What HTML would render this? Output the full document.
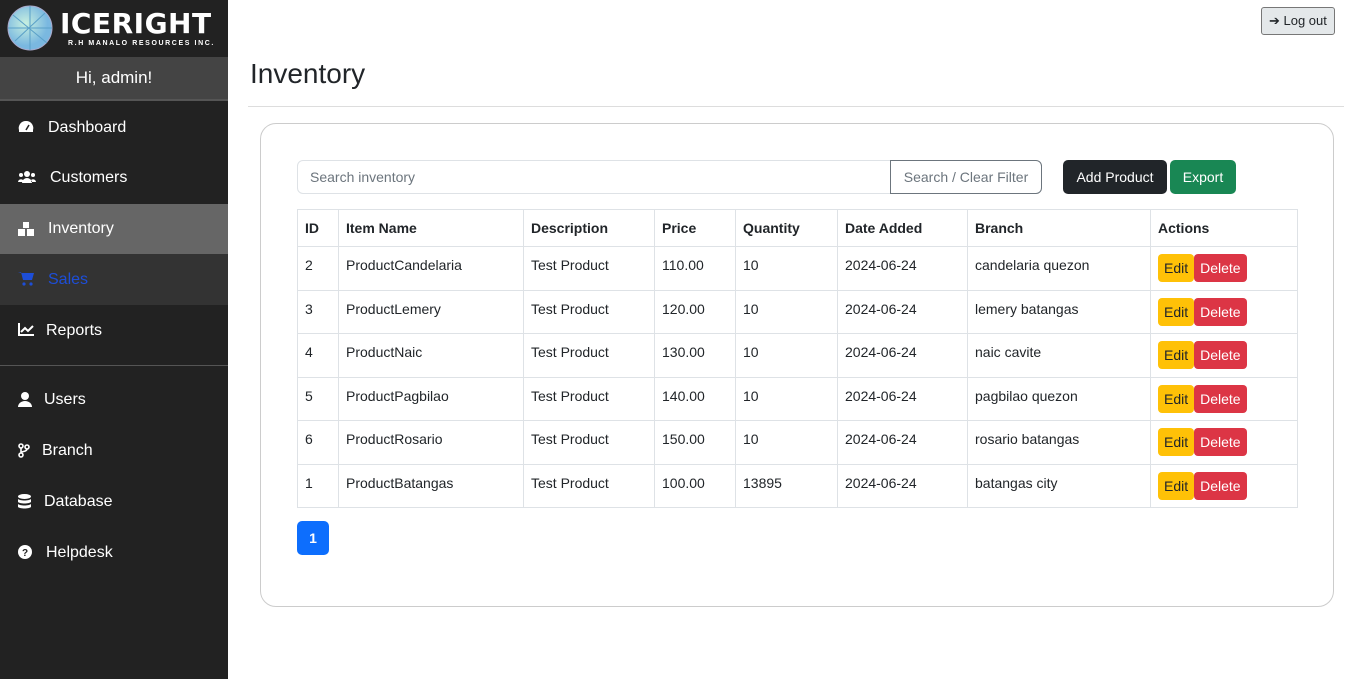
<!DOCTYPE html>
<html><head><style>
*{box-sizing:border-box;margin:0;padding:0}
body{width:1366px;height:679px;overflow:hidden;font-family:"Liberation Sans",Arial,sans-serif;background:#fff;position:relative;color:#212529}
.sb{position:absolute;left:0;top:0;width:228px;height:679px;background:#222}
.logo{height:57px;position:relative}
.hi{height:44px;background:#444;color:#fff;text-align:center;line-height:42px;font-size:17px;border-bottom:2px solid #555}
.it{position:absolute;left:0;width:228px;height:51px;color:#fff;font-size:16px;line-height:51px}
.it svg{position:absolute;left:18px;top:18px}
.it span{position:absolute;left:48px}
.main{position:absolute;left:228px;top:0;right:0}
h1{position:absolute;left:22px;top:58px;font-size:28px;font-weight:400}
.hr{position:absolute;left:20px;width:1096px;top:106px;border-top:1px solid #ddd}
.card{position:absolute;left:32px;top:123px;width:1074px;height:484px;border:1px solid #ccc;border-radius:16px}
table{position:absolute;left:36px;top:85px;border-collapse:collapse;font-size:14px}
td,th{border:1px solid #dee2e6;padding:0 7px;text-align:left;vertical-align:middle}
th{height:37px;font-weight:700}
td{height:43.5px;vertical-align:top;padding-top:10px}
td:last-child{padding-top:7px}
.b{display:inline-block;font-size:14px;height:28px;line-height:28px;border-radius:4px;padding:0 6px}
</style></head><body>
<div class="sb">
 <div class="logo">
  <svg width="54" height="54" style="position:absolute;left:5px;top:3px" viewBox="0 0 54 54"><defs><radialGradient id="g" cx="40%" cy="40%"><stop offset="0" stop-color="#c8f0e0"/><stop offset="1" stop-color="#7ab8e0"/></radialGradient></defs><circle cx="25" cy="25" r="22" fill="url(#g)" stroke="#aac" /><path d="M8 12 L42 40 M10 38 L40 10 M25 3 V47 M3 25 H47" stroke="#5aa0c8" stroke-width="1" fill="none"/></svg>
  <div style="position:absolute;left:60px;top:7px;color:#fff;font-weight:900;font-size:28px;letter-spacing:0.5px;font-family:'DejaVu Sans',sans-serif">ICERIGHT</div>
  <div style="position:absolute;left:68px;top:40px;color:#fff;font-size:7px;letter-spacing:1.6px;font-weight:700">R.H MANALO RESOURCES INC.</div>
 </div>
 <div class="hi">Hi, admin!</div>
 <div class="it" style="top:102px"><svg width="16" height="14" viewBox="0 0 16 14"><path d="M8 1A7 7 0 0 0 1 10v2h14v-2A7 7 0 0 0 8 1z" fill="#fff"/><path d="M8 10L11 5" stroke="#222" stroke-width="1.5"/></svg><span>Dashboard</span></div>
 <div class="it" style="top:152px"><svg width="18" height="14" viewBox="0 0 18 14"><circle cx="9" cy="4" r="3" fill="#fff"/><circle cx="3" cy="5" r="2" fill="#fff"/><circle cx="15" cy="5" r="2" fill="#fff"/><path d="M4 13a5 5 0 0 1 10 0zM0 12a3 3 0 0 1 5-2v2zM18 12a3 3 0 0 0-5-2v2z" fill="#fff"/></svg><span style="left:50px">Customers</span></div>
 <div class="it" style="top:204px;height:50px;background:#666;line-height:50px"><svg width="16" height="14" viewBox="0 0 16 14"><rect x="5" y="0" width="6" height="6" fill="#fff"/><rect x="0" y="7" width="7" height="7" fill="#fff"/><rect x="9" y="7" width="7" height="7" fill="#fff"/></svg><span>Inventory</span></div>
 <div class="it" style="top:254px;height:51px;background:#333;color:#1d4ed8"><svg width="16" height="14" viewBox="0 0 16 14"><path d="M0 0h3l2 8h9l2-7H4" fill="#1d4ed8"/><circle cx="6" cy="12" r="1.6" fill="#1d4ed8"/><circle cx="13" cy="12" r="1.6" fill="#1d4ed8"/></svg><span>Sales</span></div>
 <div class="it" style="top:305px"><svg width="16" height="13" viewBox="0 0 16 13"><path d="M1 0v12h15" stroke="#fff" stroke-width="2" fill="none"/><path d="M3 9l4-4 3 3 5-5" stroke="#fff" stroke-width="2" fill="none"/></svg><span style="left:46px">Reports</span></div>
 <div style="position:absolute;top:365px;left:0;width:228px;border-top:1px solid #555"></div>
 <div class="it" style="top:374px"><svg width="14" height="15" viewBox="0 0 14 15"><circle cx="7" cy="4" r="4" fill="#fff"/><path d="M0 15a7 6 0 0 1 14 0z" fill="#fff"/></svg><span style="left:44px">Users</span></div>
 <div class="it" style="top:425px"><svg width="12" height="15" viewBox="0 0 12 15"><circle cx="3" cy="3" r="2" stroke="#fff" stroke-width="1.6" fill="none"/><circle cx="3" cy="12" r="2" stroke="#fff" stroke-width="1.6" fill="none"/><circle cx="9" cy="4" r="2" stroke="#fff" stroke-width="1.6" fill="none"/><path d="M3 5v5M9 6c0 3-6 2-6 4" stroke="#fff" stroke-width="1.6" fill="none"/></svg><span style="left:42px">Branch</span></div>
 <div class="it" style="top:476px"><svg width="13" height="15" viewBox="0 0 13 15"><ellipse cx="6.5" cy="2.5" rx="6.5" ry="2.5" fill="#fff"/><path d="M0 5c2 2 11 2 13 0v3c-2 2-11 2-13 0zM0 10c2 2 11 2 13 0v3c-2 2-11 2-13 0z" fill="#fff"/></svg><span style="left:44px">Database</span></div>
 <div class="it" style="top:527px"><svg width="14" height="14" viewBox="0 0 14 14"><circle cx="7" cy="7" r="7" fill="#fff"/><text x="7" y="11" font-size="10" font-weight="700" text-anchor="middle" fill="#222" font-family="Liberation Sans">?</text></svg><span style="left:46px">Helpdesk</span></div>
</div>
<div class="main">
 <div style="position:absolute;left:1033px;top:7px;width:74px;height:28px;border:1px solid #777;border-radius:3px;background:#e4e8ea;font-size:13px;line-height:26px;padding-left:7px">&#x2794;&nbsp;Log out</div>
 <h1>Inventory</h1>
 <div class="hr"></div>
 <div class="card">
  <div style="position:absolute;left:36px;top:36px;width:594px;height:34px;border:1px solid #dee2e6;border-radius:6px 0 0 6px;font-size:14px;color:#6c757d;line-height:32px;padding-left:12px">Search inventory</div>
  <div style="position:absolute;left:629px;top:36px;width:152px;height:34px;border:1px solid #6c757d;border-radius:0 6px 6px 0;font-size:14px;color:#6c757d;line-height:32px;text-align:center">Search / Clear Filter</div>
  <div style="position:absolute;left:802px;top:36px;width:104px;height:34px;background:#212529;color:#fff;border-radius:5px;font-size:14px;line-height:34px;text-align:center">Add Product</div>
  <div style="position:absolute;left:909px;top:36px;width:66px;height:34px;background:#198754;color:#fff;border-radius:5px;font-size:14px;line-height:34px;text-align:center">Export</div>
  <table>
   <tr><th style="width:41px">ID</th><th style="width:185px">Item Name</th><th style="width:131px">Description</th><th style="width:81px">Price</th><th style="width:102px">Quantity</th><th style="width:130px">Date Added</th><th style="width:183px">Branch</th><th style="width:147px">Actions</th></tr>
   <tr><td>2</td><td>ProductCandelaria</td><td>Test Product</td><td>110.00</td><td>10</td><td>2024-06-24</td><td>candelaria quezon</td><td><span class="b" style="background:#ffc107">Edit</span><span class="b" style="background:#dc3545;color:#fff">Delete</span></td></tr>
   <tr><td>3</td><td>ProductLemery</td><td>Test Product</td><td>120.00</td><td>10</td><td>2024-06-24</td><td>lemery batangas</td><td><span class="b" style="background:#ffc107">Edit</span><span class="b" style="background:#dc3545;color:#fff">Delete</span></td></tr>
   <tr><td>4</td><td>ProductNaic</td><td>Test Product</td><td>130.00</td><td>10</td><td>2024-06-24</td><td>naic cavite</td><td><span class="b" style="background:#ffc107">Edit</span><span class="b" style="background:#dc3545;color:#fff">Delete</span></td></tr>
   <tr><td>5</td><td>ProductPagbilao</td><td>Test Product</td><td>140.00</td><td>10</td><td>2024-06-24</td><td>pagbilao quezon</td><td><span class="b" style="background:#ffc107">Edit</span><span class="b" style="background:#dc3545;color:#fff">Delete</span></td></tr>
   <tr><td>6</td><td>ProductRosario</td><td>Test Product</td><td>150.00</td><td>10</td><td>2024-06-24</td><td>rosario batangas</td><td><span class="b" style="background:#ffc107">Edit</span><span class="b" style="background:#dc3545;color:#fff">Delete</span></td></tr>
   <tr><td>1</td><td>ProductBatangas</td><td>Test Product</td><td>100.00</td><td>13895</td><td>2024-06-24</td><td>batangas city</td><td><span class="b" style="background:#ffc107">Edit</span><span class="b" style="background:#dc3545;color:#fff">Delete</span></td></tr>
  </table>
  <div style="position:absolute;left:36px;top:397px;width:32px;height:34px;background:#0d6efd;color:#fff;border-radius:5px;font-size:14px;font-weight:700;line-height:34px;text-align:center">1</div>
 </div>
</div>
</body></html>
